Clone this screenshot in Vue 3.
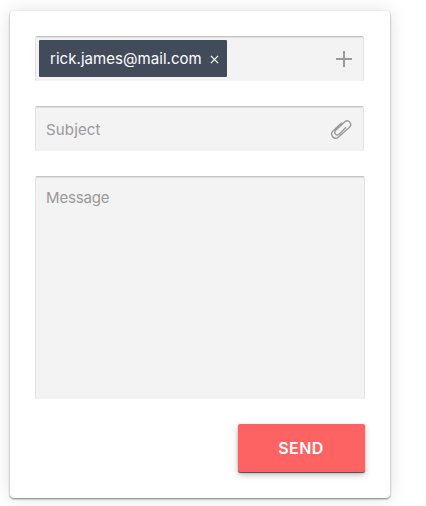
<script setup>
import { ref } from 'vue'

const recipients = ref(['rick.james@mail.com'])
const subject = ref('')
const message = ref('')

const removeRecipient = (index) => recipients.value.splice(index, 1)
</script>

<template>
  <form class="card" @submit.prevent>
    <div class="field recipients">
      <div v-for="(email, i) in recipients" :key="email" class="tag">
        <span class="email">{{ email }}</span>
        <svg class="remove" viewBox="0 0 9 9" @click="removeRecipient(i)">
          <path d="M.9.9 8.1 8.1M8.1.9.9 8.1" />
        </svg>
      </div>
      <svg class="plus" viewBox="0 0 16 16"><path d="M8 0V16M0 8H16" /></svg>
    </div>

    <div class="field subject">
      <input v-model="subject" class="control" type="text" placeholder="Subject" />
      <svg class="clip" viewBox="0 0 22 20">
        <path d="M11.6 2.9 3 10.9C-.6 14.4 4.1 20.8 8.2 17.2L19.3 7.4C23 3.7 18.3-1.2 14.6 2L6.2 9.8C3 12.8 6.2 16.8 9.4 14L15.6 7.8" />
      </svg>
    </div>

    <div class="field message">
      <textarea v-model="message" class="control area" placeholder="Message"></textarea>
    </div>

    <button class="send" type="submit">SEND</button>
  </form>
</template>

<style>
body {
  display: flow-root;
  min-height: 100vh;
  background: #fff;
}
</style>

<style scoped>
.card {
  box-sizing: border-box;
  display: flex;
  flex-direction: column;
  width: 380px;
  height: 487px;
  margin: 11px 0 0 10px;
  padding: 25px 25px 0;
  border-radius: 4px;
  background: #fff;
  box-shadow: 0 1px 2px rgba(0, 0, 0, 0.5), 0 0 18px rgba(0, 0, 0, 0.12);
  font-family: Inter, "Liberation Sans", sans-serif;
}

.field {
  box-sizing: border-box;
  display: flex;
  align-items: center;
  width: 329px;
  height: 45px;
  margin-bottom: 25px;
  padding-top: 1px;
  border: 1px solid #e2e2e2;
  border-top-color: #c6c6c6;
  border-bottom: 0;
  border-radius: 2px;
  background: #f3f3f3;
  box-shadow: inset 0 1px 0 #dedede;
}

.recipients {
  padding: 1px 11px 2px 3px;
}

.tag {
  box-sizing: border-box;
  display: flex;
  align-items: center;
  width: 188px;
  height: 37px;
  padding: 0 8px 0 11px;
  border-radius: 1px;
  background: #424b5a;
  color: #fff;
}

.email {
  padding-top: 1px;
  font-size: 15px;
  line-height: 20px;
  letter-spacing: 0.05px;
  white-space: nowrap;
}

.remove {
  flex: none;
  width: 9px;
  height: 9px;
  margin: 2px 0 0 auto;
  fill: none;
  stroke: #fff;
  stroke-width: 1.2;
}

.plus {
  width: 16px;
  height: 16px;
  margin: 1px 0 0 auto;
  fill: none;
  stroke: #999;
  stroke-width: 2;
}

.subject {
  padding: 1px 11px 0 10px;
}

.control {
  flex: 1;
  min-width: 0;
  padding: 0;
  border: 0;
  outline: 0;
  background: transparent;
  color: #555;
  font: 15px/20px Inter, "Liberation Sans", sans-serif;
}

.subject .control {
  letter-spacing: 0.15px;
}

.control::placeholder {
  color: #999;
  opacity: 1;
}

.clip {
  flex: none;
  width: 22px;
  height: 20px;
  fill: none;
  stroke: #999;
  stroke-width: 1.4;
  stroke-linecap: round;
  stroke-linejoin: round;
}

.message {
  width: 330px;
  height: 223px;
}

.area {
  align-self: stretch;
  padding: 10px;
  letter-spacing: -0.15px;
  resize: none;
}

.send {
  align-self: flex-end;
  width: 127px;
  height: 48px;
  padding: 0 1px 0 0;
  border: 0;
  border-radius: 2px;
  background: #fd6363;
  box-shadow: 0 1px 1px rgba(0, 0, 0, 0.65), 0 3px 6px rgba(0, 0, 0, 0.25);
  color: #fff;
  font: 600 16px/48px Inter, "Liberation Sans", sans-serif;
  letter-spacing: 0.4px;
}
</style>
